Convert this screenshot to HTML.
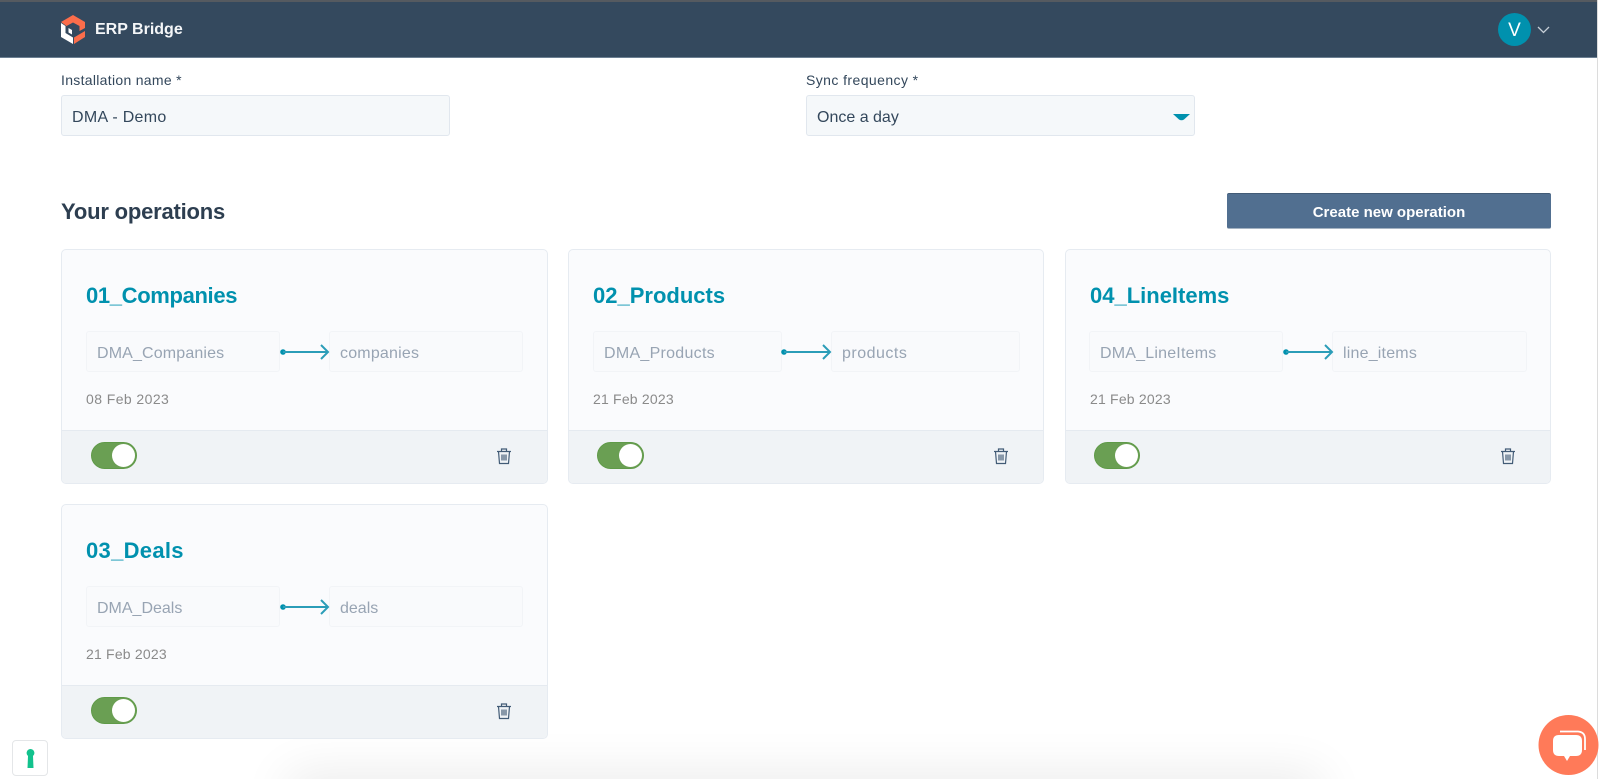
<!DOCTYPE html>
<html lang="en">
<head>
<meta charset="utf-8">
<title>ERP Bridge</title>
<style>
html,body{margin:0;padding:0;width:1600px;height:779px;overflow:hidden;background:#fff;font-family:"Liberation Sans",sans-serif;color:#33475b}
*{box-sizing:border-box}
#wrap{position:relative;width:1600px;height:779px;overflow:hidden;background:#fff;filter:blur(.35px)}
.a{position:absolute}
#top{left:0;top:0;width:1598px;height:58px;background:#34495e;border-top:2px solid #555a60;border-bottom:1px solid #6b7f92}
#sb{left:1597px;top:0;width:3px;height:779px;background:#fff;border-left:1px solid #dcdcdc}
.brand{left:95px;top:19px;font-size:16px;line-height:22px;font-weight:700;color:#f4f6f8;white-space:nowrap}
.avatar{left:1498px;top:13px;width:33px;height:33px;border-radius:50%;background:#0091ae;color:#fff;font-size:19px;line-height:35px;text-align:center}
.lbl{top:71px;font-size:14px;line-height:18px;letter-spacing:.3px;color:#33475b;white-space:nowrap}
.inp{top:95px;width:389px;height:41px;background:#f5f8fa;border:1px solid #e1e7ee;border-radius:3px;font-size:16px;line-height:43px;padding-left:10px;color:#33475b}
h2{margin:0;left:61px;top:199px;font-size:22px;line-height:26px;font-weight:700;letter-spacing:-.2px;color:#2d3e50}
.btn{left:1227px;top:193px;width:324px;height:36px;background:#516f90;border-top:1px solid #425b76;border-bottom:1px solid #a5b3c2;border-radius:2px;color:#fff;font-size:15px;font-weight:700;line-height:37px;text-align:center}
.card{background:#fafbfd;border:1px solid #e6ebf1;border-radius:5px;overflow:hidden}
.foot{left:0;right:0;bottom:0;height:53px;background:#f0f3f6;border-top:1px solid #e5eaf0}
.t{font-size:22px;line-height:26px;font-weight:700;color:#0091ae;white-space:nowrap}
.box{height:41px;background:#f9fafc;border:1px solid #f2f4f7;border-radius:3px;font-size:16px;line-height:43px;letter-spacing:.15px;padding-left:10px;color:#98a4b3;white-space:nowrap}
.d{font-size:14px;line-height:18px;letter-spacing:.2px;color:#8a8a8a;white-space:nowrap}
.tg{width:46px;height:27px;border-radius:14px;background:#6a9f53;border:1px solid #5f9a48}
.tg i{position:absolute;right:1px;top:1px;width:23px;height:23px;border-radius:50%;background:#fff}
svg{position:absolute;display:block;overflow:visible}
#shadow{left:296px;top:783px;width:1017px;height:30px;box-shadow:0 0 50px 8px rgba(0,0,0,.09)}
.key{left:12px;top:740px;width:36px;height:36px;background:#fff;border:1px solid #e4e6e8;border-radius:4px}
</style>
</head>
<body>
<div id="wrap">
<div class="a" id="shadow"></div>
<div class="a" id="top"></div>
<div class="a" id="sb"></div>

<svg style="left:61px;top:15px" width="24" height="29" viewBox="0 0 24 29">
<path fill="#fb6d4b" d="M12 0 24 7 24 13 18.500 16 18.500 11 12 7.500 5.500 11 0 7Z"/>
<path fill="#fff" d="M0 8 4.500 11 4.500 18 12 22.500 12 29 0 22Z"/>
<path fill="#fb6d4b" d="M13 22.500 24 16 24 22 13 29Z"/>
<path fill="#fff" d="M7.500 13 11 15 11 19.500 7.500 17.500Z"/>
</svg>
<div class="a brand">ERP Bridge</div>
<div class="a avatar">V</div>
<svg style="left:1537px;top:26px" width="13" height="8" viewBox="0 0 13 8"><path d="M1 1 6.500 6.500 12 1" fill="none" stroke="#c6ced7" stroke-width="1.300"/></svg>

<div class="a lbl" style="left:61px">Installation name *</div>
<div class="a inp" style="left:61px;letter-spacing:.3px">DMA - Demo</div>
<div class="a lbl" style="left:806px;letter-spacing:.42px">Sync frequency *</div>
<div class="a inp" style="left:806px">Once a day</div>
<svg style="left:1173px;top:114px" width="17" height="7" viewBox="0 0 17 7"><path d="M0 0H17L11 5.500Q8.500 7 6 5.500Z" fill="#0091ae"/></svg>

<h2 class="a">Your operations</h2>
<div class="a btn">Create new operation</div>

<!-- Card 1 -->
<div class="a card" style="left:61px;top:249px;width:487px;height:235px"><div class="a foot"></div></div>
<div class="a t" style="left:86px;top:283px;letter-spacing:-.35px">01_Companies</div>
<div class="a box" style="left:86px;top:331px;width:194px">DMA_Companies</div>
<div class="a box" style="left:329px;top:331px;width:194px;letter-spacing:.2px">companies</div>
<svg style="left:280px;top:342px" width="50" height="20" viewBox="0 0 50 20"><circle cx="3" cy="10" r="2.800" fill="#0091ae"/><path d="M3 10H48M41 3 48 10 41 17" fill="none" stroke="#2b9db8" stroke-width="2"/></svg>
<div class="a d" style="left:86px;top:390px;letter-spacing:.42px">08 Feb 2023</div>
<div class="a tg" style="left:91px;top:442px"><i></i></div>
<svg style="left:496px;top:448px" width="16" height="17" viewBox="0 0 16 17"><path d="M1 3.500H15M5.500 3.500V1H10.500V3.500M2.500 3.500 3.500 15.500H12.500L13.500 3.500M6 6.500V12.500M8 6.500V12.500M10 6.500V12.500" fill="none" stroke="#425b76" stroke-width="1.200"/></svg>

<!-- Card 2 -->
<div class="a card" style="left:568px;top:249px;width:476px;height:235px"><div class="a foot"></div></div>
<div class="a t" style="left:593px;top:283px">02_Products</div>
<div class="a box" style="left:593px;top:331px;width:189px;letter-spacing:.28px">DMA_Products</div>
<div class="a box" style="left:831px;top:331px;width:189px;letter-spacing:.5px">products</div>
<svg style="left:781px;top:342px" width="50" height="20" viewBox="0 0 50 20"><circle cx="3" cy="10" r="2.800" fill="#0091ae"/><path d="M3 10H49M42 3 49 10 42 17" fill="none" stroke="#2b9db8" stroke-width="2"/></svg>
<div class="a d" style="left:593px;top:390px">21 Feb 2023</div>
<div class="a tg" style="left:597px;top:442px;width:47px"><i></i></div>
<svg style="left:993px;top:448px" width="16" height="17" viewBox="0 0 16 17"><path d="M1 3.500H15M5.500 3.500V1H10.500V3.500M2.500 3.500 3.500 15.500H12.500L13.500 3.500M6 6.500V12.500M8 6.500V12.500M10 6.500V12.500" fill="none" stroke="#425b76" stroke-width="1.200"/></svg>

<!-- Card 3 -->
<div class="a card" style="left:1065px;top:249px;width:486px;height:235px"><div class="a foot"></div></div>
<div class="a t" style="left:1090px;top:283px">04_LineItems</div>
<div class="a box" style="left:1089px;top:331px;width:194px;letter-spacing:.2px">DMA_LineItems</div>
<div class="a box" style="left:1332px;top:331px;width:195px;letter-spacing:.2px">line_items</div>
<svg style="left:1283px;top:342px" width="50" height="20" viewBox="0 0 50 20"><circle cx="3" cy="10" r="2.800" fill="#0091ae"/><path d="M3 10H49M42 3 49 10 42 17" fill="none" stroke="#2b9db8" stroke-width="2"/></svg>
<div class="a d" style="left:1090px;top:390px">21 Feb 2023</div>
<div class="a tg" style="left:1094px;top:442px"><i></i></div>
<svg style="left:1500px;top:448px" width="16" height="17" viewBox="0 0 16 17"><path d="M1 3.500H15M5.500 3.500V1H10.500V3.500M2.500 3.500 3.500 15.500H12.500L13.500 3.500M6 6.500V12.500M8 6.500V12.500M10 6.500V12.500" fill="none" stroke="#425b76" stroke-width="1.200"/></svg>

<!-- Card 4 -->
<div class="a card" style="left:61px;top:504px;width:487px;height:235px"><div class="a foot"></div></div>
<div class="a t" style="left:86px;top:538px;letter-spacing:.3px">03_Deals</div>
<div class="a box" style="left:86px;top:586px;width:194px;letter-spacing:0">DMA_Deals</div>
<div class="a box" style="left:329px;top:586px;width:194px;letter-spacing:0">deals</div>
<svg style="left:280px;top:597px" width="50" height="20" viewBox="0 0 50 20"><circle cx="3" cy="10" r="2.800" fill="#0091ae"/><path d="M3 10H48M41 3 48 10 41 17" fill="none" stroke="#2b9db8" stroke-width="2"/></svg>
<div class="a d" style="left:86px;top:645px">21 Feb 2023</div>
<div class="a tg" style="left:91px;top:697px"><i></i></div>
<svg style="left:496px;top:703px" width="16" height="17" viewBox="0 0 16 17"><path d="M1 3.500H15M5.500 3.500V1H10.500V3.500M2.500 3.500 3.500 15.500H12.500L13.500 3.500M6 6.500V12.500M8 6.500V12.500M10 6.500V12.500" fill="none" stroke="#425b76" stroke-width="1.200"/></svg>

<div class="a key">
<svg style="left:13px;top:7px" width="9" height="21" viewBox="0 0 9 21"><path fill="#12c28d" d="M4.500 1A4 4 0 0 1 7 8L7.500 20H1.500L2 8A4 4 0 0 1 4.500 1Z"/></svg>
</div>

<svg style="left:1537px;top:714px" width="62" height="62" viewBox="0 0 62 62">
<circle cx="31.500" cy="31" r="30" fill="#ff7a59"/>
<path d="M23 17.500H41Q48 18 48 25V36" fill="none" stroke="#fff" stroke-width="1.800"/>
<path fill="#fff" d="M22 21H39Q45 21 45 27V36Q45 42 39 42H33L30 47 27 42H22Q16 42 16 36V27Q16 21 22 21Z"/>
</svg>
</div>
</body>
</html>
